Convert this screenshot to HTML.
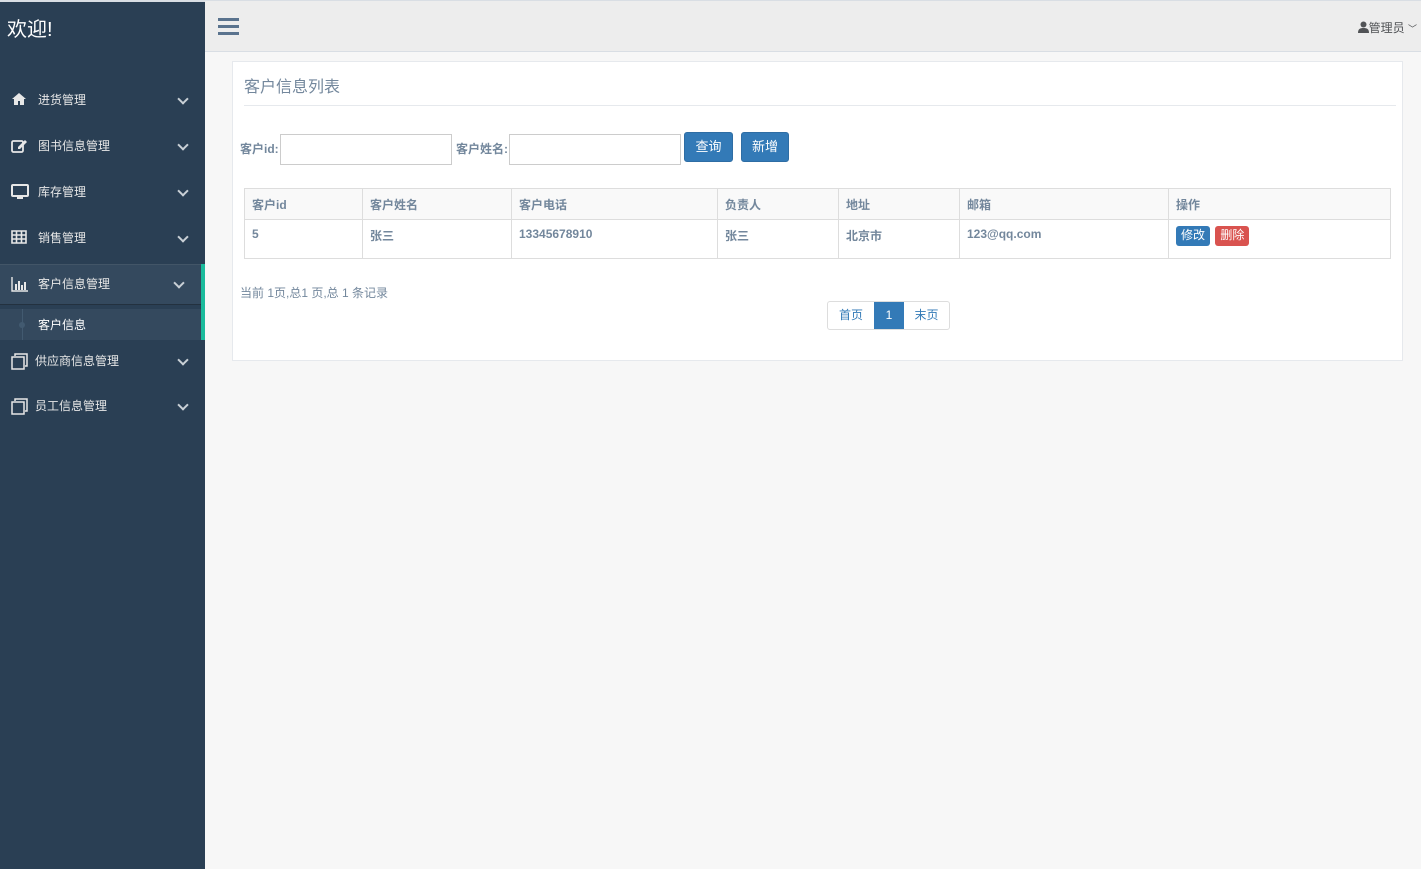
<!DOCTYPE html>
<html><head><meta charset="utf-8"><style>
*{box-sizing:border-box;margin:0;padding:0}
body{width:1421px;height:869px;overflow:hidden;background:#f7f7f7;font-family:"Liberation Sans","Noto Sans CJK SC",sans-serif;font-size:13px;color:#73879c;position:relative}
.side{position:absolute;left:0;top:0;width:205px;height:869px;background:#2a3f54;border-top:2px solid #d9dee4}
.title{position:absolute;left:7px;top:11px;color:#fff;font-size:20px}
.item{position:absolute;left:0;width:205px;height:40px;color:#e7e7e7;font-size:12px}
.item .t{position:absolute;left:38px;top:10px}
.item .ic{position:absolute;left:11px;top:11px}
.item .ch{position:absolute;right:18px;top:14px;width:8px;height:8px;border-right:2px solid #c9d0d6;border-bottom:2px solid #c9d0d6;transform:rotate(45deg)}
.top{position:absolute;left:205px;top:0;width:1216px;height:52px;background:#ededed;border-top:1px solid #d9dee4;border-bottom:1px solid #d9dee4}
.panel{position:absolute;left:232px;top:61px;width:1171px;height:300px;background:#fff;border:1px solid #e6e9ed}
table{position:absolute;left:11px;top:126px;border-collapse:collapse;width:1147px;font-size:12px;font-weight:bold;color:#73879c}
td,th{border:1px solid #ddd;text-align:left;padding:0 7px;vertical-align:top}
th{height:31px;background:#f9f9f9;padding-top:7px}
td{height:39px;padding-top:7px}
input{position:absolute;height:31px;border:1px solid #ccc;background:#fff}
.btn{position:absolute;height:30px;background:#337ab7;color:#fff;border-radius:3px;font-size:13px;text-align:center;line-height:28px;border:1px solid #2e6da4}
.sm{display:inline-block;height:20px;line-height:19px;padding:0 5px;border-radius:3px;color:#fff;font-size:12px;font-weight:normal}
</style></head><body>
<div class="side">
<div class="title">欢迎!</div>
<div class="item" style="top:79px"><svg class="ic" width="16" height="14" viewBox="0 0 16 14"><path d="M8 1L1 7h2v6h4V9h2v4h4V7h2z" fill="#e7e7e7"/></svg><span class="t">进货管理</span><i class="ch"></i></div>
<div class="item" style="top:125px"><svg class="ic" width="17" height="15" viewBox="0 0 17 15"><rect x="1" y="3" width="11" height="11" rx="1.5" fill="none" stroke="#e7e7e7" stroke-width="1.8"/><path d="M7 9l7-7 2 2-7 7H7z" fill="#e7e7e7"/></svg><span class="t">图书信息管理</span><i class="ch"></i></div>
<div class="item" style="top:171px"><svg class="ic" width="18" height="16" viewBox="0 0 18 16"><rect x="1" y="1" width="16" height="11" rx="1" fill="none" stroke="#e7e7e7" stroke-width="2"/><rect x="6" y="12" width="6" height="3" fill="#e7e7e7"/></svg><span class="t">库存管理</span><i class="ch"></i></div>
<div class="item" style="top:217px"><svg class="ic" width="16" height="14" viewBox="0 0 16 14"><path d="M1 1h14v12H1zM1 5h14M1 9h14M5.5 1v12M10.5 1v12" fill="none" stroke="#e7e7e7" stroke-width="1.6"/></svg><span class="t">销售管理</span><i class="ch"></i></div>
<div class="item" style="top:262px;height:41px;background:#34495e;border-top:1px solid #425567;border-bottom:1px solid #23313f"><svg class="ic" width="18" height="16" viewBox="0 0 18 16"><path d="M1 1v14h16" fill="none" stroke="#e7e7e7" stroke-width="1.4"/><path d="M4 8h2v6H4zM7 5h2v9H7zM10 9h2v5h-2zM13 6h2v8h-2z" fill="#e7e7e7"/></svg><span class="t">客户信息管理</span><i class="ch" style="right:22px"></i></div>
<div style="position:absolute;left:0;top:307px;width:201px;height:31px;background:#34495e"><div style="position:absolute;left:22px;top:0;width:1px;height:31px;background:#425a70"></div><div style="position:absolute;left:19px;top:13px;width:6px;height:6px;border-radius:50%;background:#425a70"></div><span style="position:absolute;left:38px;top:7px;color:#fff;font-size:12px">客户信息</span></div>
<div style="position:absolute;left:201px;top:262px;width:4px;height:76px;background:#1abb9c"></div>
<div class="item" style="top:340px"><svg class="ic" width="17" height="17" viewBox="0 0 17 17" style="top:11px"><path d="M4 3V1h12v12h-2" fill="none" stroke="#e7e7e7" stroke-width="1.5"/><rect x="1" y="4" width="12" height="12" fill="none" stroke="#e7e7e7" stroke-width="1.5"/></svg><span class="t" style="left:35px">供应商信息管理</span><i class="ch"></i></div>
<div class="item" style="top:385px"><svg class="ic" width="17" height="17" viewBox="0 0 17 17" style="top:11px"><path d="M4 3V1h12v12h-2" fill="none" stroke="#e7e7e7" stroke-width="1.5"/><rect x="1" y="4" width="12" height="12" fill="none" stroke="#e7e7e7" stroke-width="1.5"/></svg><span class="t" style="left:35px">员工信息管理</span><i class="ch"></i></div>
</div>
<div class="top">
<div style="position:absolute;left:13px;top:17px;width:21px;height:3px;background:#5a738e;box-shadow:0 7px 0 #5a738e,0 14px 0 #5a738e"></div>
<div style="position:absolute;right:4px;top:18px;font-size:12px;color:#515356"><svg width="11" height="12" viewBox="0 0 11 12" style="vertical-align:-1px"><circle cx="5.5" cy="3.5" r="3" fill="#515356"/><path d="M0 12c0-4 2-5 5.5-5S11 8 11 12z" fill="#515356"/></svg>管理员 <span style="font-size:9px">﹀</span></div>
</div>
<div class="panel">
<div style="position:absolute;left:11px;top:11px;font-size:16px;color:#73879c">客户信息列表</div>
<div style="position:absolute;left:11px;right:6px;top:43px;height:1px;background:#e6e9ed"></div>
<span style="position:absolute;left:7px;top:78px;font-weight:bold;font-size:12px">客户id:</span>
<input style="left:47px;top:72px;width:172px">
<span style="position:absolute;left:223px;top:78px;font-weight:bold;font-size:12px">客户姓名:</span>
<input style="left:276px;top:72px;width:172px">
<div class="btn" style="left:451px;top:70px;width:49px">查询</div>
<div class="btn" style="left:508px;top:70px;width:48px">新增</div>
<table><tr><th style="width:118px">客户id</th><th style="width:149px">客户姓名</th><th style="width:206px">客户电话</th><th style="width:121px">负责人</th><th style="width:121px">地址</th><th style="width:209px">邮箱</th><th>操作</th></tr>
<tr><td>5</td><td>张三</td><td>13345678910</td><td>张三</td><td>北京市</td><td>123@qq.com</td><td style="padding-top:6px"><span class="sm" style="background:#337ab7">修改</span> <span class="sm" style="background:#d9534f;margin-left:2px">删除</span></td></tr></table>
<div style="position:absolute;left:7px;top:222px;font-size:12px">当前 1页,总1 页,总 1 条记录</div>
<div style="position:absolute;left:594px;top:239px;height:29px;border:1px solid #ddd;border-radius:3px;display:flex;font-size:12px;color:#337ab7;line-height:27px;background:#fff">
<span style="width:46px;text-align:center">首页</span><span style="width:30px;text-align:center;background:#337ab7;color:#fff">1</span><span style="width:45px;text-align:center">末页</span></div>
</div>
</body></html>
